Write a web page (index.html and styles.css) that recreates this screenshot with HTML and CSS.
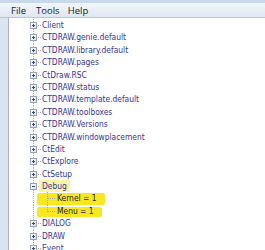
FILE: index.html
```html
<!DOCTYPE html>
<html>
<head>
<meta charset="utf-8">
<link rel="stylesheet" href="styles.css">
</head>
<body>
<div class="window">
  <div class="topstrip"></div>
  <div class="menubar">
    <span class="menu-item m-file">File</span>
    <span class="menu-item m-tools">Tools</span>
    <span class="menu-item m-help">Help</span>
  </div>
  <div class="main">
    <div class="sidestrip"></div>
    <div class="tree">
      <div class="row"><span class="conn plus"><i class="box"></i></span><span class="label">Client</span></div>
      <div class="row"><span class="conn plus"><i class="box"></i></span><span class="label">CTDRAW.genie.default</span></div>
      <div class="row"><span class="conn plus"><i class="box"></i></span><span class="label">CTDRAW.library.default</span></div>
      <div class="row"><span class="conn plus"><i class="box"></i></span><span class="label">CTDRAW.pages</span></div>
      <div class="row"><span class="conn plus"><i class="box"></i></span><span class="label">CtDraw.RSC</span></div>
      <div class="row"><span class="conn plus"><i class="box"></i></span><span class="label">CTDRAW.status</span></div>
      <div class="row"><span class="conn plus"><i class="box"></i></span><span class="label">CTDRAW.template.default</span></div>
      <div class="row"><span class="conn plus"><i class="box"></i></span><span class="label">CTDRAW.toolboxes</span></div>
      <div class="row"><span class="conn plus"><i class="box"></i></span><span class="label">CTDRAW.Versions</span></div>
      <div class="row"><span class="conn plus"><i class="box"></i></span><span class="label">CTDRAW.windowplacement</span></div>
      <div class="row"><span class="conn plus"><i class="box"></i></span><span class="label">CtEdit</span></div>
      <div class="row"><span class="conn plus"><i class="box"></i></span><span class="label">CtExplore</span></div>
      <div class="row"><span class="conn plus"><i class="box"></i></span><span class="label">CtSetup</span></div>
      <div class="row"><span class="conn minus"><i class="box"></i></span><span class="label hl-soft">Debug</span></div>
      <div class="row child hl-kernel"><span class="conn pass"></span><span class="conn leaf mid"></span><span class="label val">Kernel = 1</span></div>
      <div class="row child hl-menu"><span class="conn pass"></span><span class="conn leaf last"></span><span class="label val">Menu = 1</span></div>
      <div class="row"><span class="conn plus"><i class="box"></i></span><span class="label">DIALOG</span></div>
      <div class="row"><span class="conn plus"><i class="box"></i></span><span class="label">DRAW</span></div>
      <div class="row"><span class="conn plus"><i class="box"></i></span><span class="label">Event</span></div>
    </div>
  </div>
</div>
</body>
</html>
```

FILE: styles.css
```css
html, body {
  margin: 0;
  padding: 0;
  background: #ffffff;
  overflow: hidden;
}

.window {
  width: 265px;
  height: 250px;
  display: flex;
  flex-direction: column;
  overflow: hidden;
}

.topstrip {
  height: 3px;
  background: #c9d9ec;
  flex: none;
}

.menubar {
  height: 14px;
  flex: none;
  display: flex;
  align-items: center;
  background: linear-gradient(#f3f6fb, #dfe7f3);
  border-bottom: 1px solid #bcc6d4;
  font-family: "Open Sans", "Noto Sans", sans-serif;
  font-size: 9.5px;
  color: #1c1c1c;
  padding-left: 11px;
}

.menu-item {
  line-height: 15px;
}
.m-tools { margin-left: 10px; }
.m-help { margin-left: 8px; }

.main {
  flex: 1;
  display: flex;
  min-height: 0;
}

.sidestrip {
  width: 8px;
  flex: none;
  background: #dae4f1;
  border-right: 1px solid #aab4c4;
}

.tree {
  flex: 1;
  padding-top: 1px;
  padding-left: 18px;
  font-family: "DejaVu Sans Condensed", "Liberation Sans", Arial, sans-serif;
  font-size: 8.4px;
  color: #34349a;
}

.row {
  height: 12.4px;
  display: flex;
  align-items: stretch;
  position: relative;
}

.conn {
  width: 14px;
  flex: none;
  position: relative;
}

.conn.plus, .conn.minus, .conn.pass, .conn.leaf.mid {
  background-image:
    repeating-linear-gradient(to bottom, #a8a8a8 0 1px, transparent 1px 2px);
  background-size: 1px 100%;
  background-position: 6px 0;
  background-repeat: no-repeat;
}

.conn.plus::after, .conn.minus::after, .conn.leaf::after {
  content: "";
  position: absolute;
  left: 7px;
  right: 0;
  top: 6px;
  height: 1px;
  background-image: repeating-linear-gradient(to right, #a8a8a8 0 1px, transparent 1px 2px);
}

.conn.leaf.last::before {
  content: "";
  position: absolute;
  left: 6px;
  top: 0;
  height: 7px;
  width: 1px;
  background-image: repeating-linear-gradient(to bottom, #a8a8a8 0 1px, transparent 1px 2px);
}

.box {
  position: absolute;
  left: 3px;
  top: 3px;
  width: 5px;
  height: 5px;
  border: 1px solid #98a4b8;
  background: linear-gradient(135deg, #ffffff, #dadee6);
  z-index: 1;
}

.box::before {
  content: "";
  position: absolute;
  left: 1px;
  top: 2px;
  width: 3px;
  height: 1px;
  background: #3a4a78;
}

.plus .box::after {
  content: "";
  position: absolute;
  left: 2px;
  top: 1px;
  width: 1px;
  height: 3px;
  background: #3a4a78;
}

.label {
  margin-left: 1px;
  line-height: 12.4px;
  white-space: nowrap;
  position: relative;
  z-index: 1;
}

.label.val {
  color: #1a1a2e;
  margin-left: 2px;
}

.hl-soft {
  background: #fbf3a6;
  padding: 0 3px;
  margin-left: -2px;
}

.hl-kernel::before, .hl-menu::before {
  content: "";
  position: absolute;
  background: #f9e722;
  left: 10px;
  width: 68px;
  top: 0;
  height: 12px;
  border-radius: 2px;
  z-index: 0;
}
.hl-kernel::before { top: 1px; }
.hl-menu::before { top: 2px; width: 65px; height: 10px; }
```
